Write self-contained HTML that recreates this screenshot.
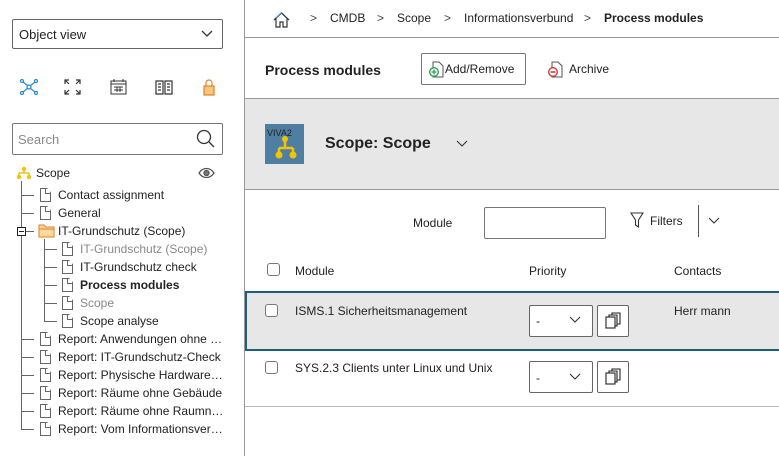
<!DOCTYPE html>
<html><head><meta charset="utf-8"><style>
*{box-sizing:border-box;margin:0;padding:0}
body{width:779px;height:456px;overflow:hidden;background:#fff;font-family:"Liberation Sans",sans-serif;color:#222;position:relative;font-size:12px}
.a{position:absolute}
.t{position:absolute;font-size:12px;white-space:nowrap;line-height:14px}
.f{position:absolute;width:11px;height:14px;border:1px solid #666;background:#fff;clip-path:polygon(0 0,65% 0,100% 30%,100% 100%,0 100%)}
.f:after{content:"";position:absolute;right:-1px;top:-1px;width:5px;height:5px;border-left:1px solid #666;border-bottom:1px solid #666}
.hl{position:absolute;height:1px;background:#666}
.vl{position:absolute;width:1px;background:#666}
.cb{position:absolute;width:13px;height:13px;border:1px solid #777;border-radius:3px;background:#fff}
.sel{position:absolute;width:64px;height:32px;border:1px solid #666;border-radius:2px;background:#fff}
.cp{position:absolute;width:32px;height:32px;border:1px solid #666;border-radius:2px;background:#fff}
</style></head><body>
<div class="a" style="left:244px;top:0;width:1px;height:456px;background:#999"></div>
<div class="a" style="left:12px;top:19px;width:211px;height:30px;border:1px solid #666;border-radius:2px"></div>
<div class="t" style="left:19px;top:28px;font-size:13px">Object view</div>
<svg class="a" style="left:200px;top:28px" width="14" height="12"><path d="M2 3l5 5 5-5" stroke="#333" fill="none" stroke-width="1.3"/></svg>
<svg class="a" style="left:19px;top:78px" width="20" height="18" stroke="#2a8ad0" fill="none" stroke-width="1.2"><circle cx="10" cy="9" r="2"/><circle cx="3" cy="3" r="1.5"/><circle cx="17" cy="3" r="1.5"/><circle cx="3" cy="15" r="1.5"/><circle cx="17" cy="15" r="1.5"/><path d="M4 4l5 4M16 4l-5 4M4 14l5-4M16 14l-5-4"/></svg>
<svg class="a" style="left:64px;top:79px" width="17" height="16" stroke="#333" fill="none" stroke-width="1.2"><path d="M1 5V1h4M1 1l4 4M16 5V1h-4M16 1l-4 4M1 11v4h4M1 15l4-4M16 11v4h-4M16 15l-4-4"/></svg>
<svg class="a" style="left:110px;top:79px" width="17" height="16" stroke="#333" fill="none" stroke-width="1"><rect x="1" y="2" width="15" height="13"/><path d="M1 5h15M4 0v3M13 0v3M4 8h9M4 11h9M7 8v5M10 8v5"/></svg>
<svg class="a" style="left:155px;top:79px" width="18" height="16" stroke="#333" fill="none" stroke-width="1.2"><path d="M1 2h7v13H1zM10 2h7v13h-7zM3 5h3M3 8h3M3 11h3M12 5h3M12 8h3M12 11h3"/></svg>
<svg class="a" style="left:203px;top:78px" width="12" height="18" stroke="#e67e22" fill="none" stroke-width="1.2"><path d="M3 8V5a3 3 0 0 1 6 0v3"/><rect x="1" y="8" width="10" height="9" fill="#f7c77e"/></svg>
<div class="a" style="left:12px;top:123px;width:211px;height:32px;border:1px solid #777;border-radius:2px"></div>
<div class="t" style="left:18px;top:133px;font-size:13px;color:#888">Search</div>
<svg class="a" style="left:196px;top:129px" width="20" height="20" stroke="#333" fill="none" stroke-width="1.3"><circle cx="8" cy="8" r="6.5"/><path d="M13 13l5 5"/></svg>
<svg class="a" style="left:16px;top:166px" width="16" height="14"><path d="M8 3v4M3 7h10M3 7v4M13 7v4" stroke="#e7b400" stroke-width="1.3" fill="none"/><circle cx="8" cy="3" r="2.2" fill="#f5c400"/><circle cx="3" cy="11" r="2.2" fill="#f5c400"/><circle cx="13" cy="11" r="2.2" fill="#f5c400"/></svg>
<div class="t" style="left:36px;top:166px">Scope</div>
<svg class="a" style="left:198px;top:167px" width="17" height="12" stroke="#555" fill="none" stroke-width="1.3"><path d="M1 6c4-6 11-6 15 0c-4 6-11 6-15 0z"/><circle cx="8.5" cy="6" r="2.5" fill="#777"/></svg>
<div class="vl" style="left:21px;top:181px;height:248px"></div>
<div class="hl" style="left:21px;top:195px;width:13px"></div>
<div class="hl" style="left:21px;top:213px;width:13px"></div>
<div class="hl" style="left:21px;top:231px;width:13px"></div>
<div class="hl" style="left:21px;top:339px;width:13px"></div>
<div class="hl" style="left:21px;top:357px;width:13px"></div>
<div class="hl" style="left:21px;top:375px;width:13px"></div>
<div class="hl" style="left:21px;top:393px;width:13px"></div>
<div class="hl" style="left:21px;top:411px;width:13px"></div>
<div class="hl" style="left:21px;top:429px;width:13px"></div>
<div class="a" style="left:17px;top:227px;width:9px;height:9px;border:1px solid #222;background:#fff"></div>
<div class="a" style="left:19px;top:231px;width:5px;height:1px;background:#222"></div>
<div class="f" style="left:40px;top:188px"></div><div class="t" style="left:58px;top:188px">Contact assignment</div>
<div class="f" style="left:40px;top:206px"></div><div class="t" style="left:58px;top:206px">General</div>
<svg class="a" style="left:38px;top:224px" width="17" height="14"><path d="M1 1h5l2 2h8v10H1z" fill="#fbd9a0" stroke="#e67e22"/><path d="M1 5h15" stroke="#e67e22"/></svg>
<div class="t" style="left:58px;top:224px">IT-Grundschutz (Scope)</div>
<div class="vl" style="left:44px;top:239px;height:82px"></div>
<div class="hl" style="left:44px;top:249px;width:13px"></div>
<div class="hl" style="left:44px;top:267px;width:13px"></div>
<div class="hl" style="left:44px;top:285px;width:13px"></div>
<div class="hl" style="left:44px;top:303px;width:13px"></div>
<div class="hl" style="left:44px;top:321px;width:13px"></div>
<div class="f" style="left:62px;top:242px"></div><div class="t" style="left:80px;top:242px;color:#888">IT-Grundschutz (Scope)</div>
<div class="f" style="left:62px;top:260px"></div><div class="t" style="left:80px;top:260px">IT-Grundschutz check</div>
<div class="f" style="left:62px;top:278px"></div><div class="t" style="left:80px;top:278px;font-weight:bold">Process modules</div>
<div class="f" style="left:62px;top:296px"></div><div class="t" style="left:80px;top:296px;color:#888">Scope</div>
<div class="f" style="left:62px;top:314px"></div><div class="t" style="left:80px;top:314px">Scope analyse</div>
<div class="f" style="left:40px;top:332px"></div><div class="t" style="left:58px;top:332px">Report: Anwendungen ohne …</div>
<div class="f" style="left:40px;top:350px"></div><div class="t" style="left:58px;top:350px">Report: IT-Grundschutz-Check</div>
<div class="f" style="left:40px;top:368px"></div><div class="t" style="left:58px;top:368px">Report: Physische Hardware…</div>
<div class="f" style="left:40px;top:386px"></div><div class="t" style="left:58px;top:386px">Report: Räume ohne Gebäude</div>
<div class="f" style="left:40px;top:404px"></div><div class="t" style="left:58px;top:404px">Report: Räume ohne Raumn…</div>
<div class="f" style="left:40px;top:422px"></div><div class="t" style="left:58px;top:422px">Report: Vom Informationsver…</div>
<svg class="a" style="left:273px;top:11px" width="17" height="17" stroke="#333" fill="none" stroke-width="1.2"><path d="M1 9L8.5 2 16 9M3 7v9h4v-5h3v5h4V7"/><path d="M3 7l5.5-5" stroke="#2a8ad0"/></svg>
<div class="t" style="left:310px;top:11px;color:#444">&gt;</div>
<div class="t" style="left:330px;top:11px">CMDB</div>
<div class="t" style="left:377px;top:11px;color:#444">&gt;</div>
<div class="t" style="left:397px;top:11px">Scope</div>
<div class="t" style="left:444px;top:11px;color:#444">&gt;</div>
<div class="t" style="left:464px;top:11px">Informationsverbund</div>
<div class="t" style="left:584px;top:11px;color:#444">&gt;</div>
<div class="t" style="left:604px;top:11px;font-weight:bold">Process modules</div>
<div class="a" style="left:245px;top:37px;width:534px;height:1px;background:#999"></div>
<div class="t" style="left:265px;top:62px;font-size:14px;font-weight:bold;line-height:16px">Process modules</div>
<div class="a" style="left:421px;top:53px;width:105px;height:32px;border:1px solid #777;border-radius:2px"></div>
<svg class="a" style="left:429px;top:61px" width="15" height="17"><path d="M4 1h6l4 4v11H4z" fill="#fff" stroke="#555"/><circle cx="5" cy="11" r="4.3" fill="#fff" stroke="#2a9d4a" stroke-width="1.3"/><path d="M5 8.5v5M2.5 11h5" stroke="#2a9d4a" stroke-width="1.3"/></svg>
<div class="t" style="left:445px;top:62px">Add/Remove</div>
<svg class="a" style="left:548px;top:61px" width="15" height="17"><path d="M4 1h6l4 4v11H4z" fill="#fff" stroke="#555"/><circle cx="5" cy="11" r="4.3" fill="#fff" stroke="#d03030" stroke-width="1.3"/><path d="M2.5 11h5" stroke="#d03030" stroke-width="1.5"/></svg>
<div class="t" style="left:569px;top:62px">Archive</div>
<div class="a" style="left:245px;top:98px;width:534px;height:92px;background:#e6e7e6;border-top:1px solid #999;border-bottom:1px solid #999"></div>
<div class="a" style="left:265px;top:124px;width:39px;height:40px;background:#4f7ea3"></div>
<div class="t" style="left:267px;top:126px;font-size:9px;color:#222">VIVA2</div>
<svg class="a" style="left:275px;top:136px" width="24" height="26"><path d="M10 3v8M4 12h14M4 12v6M18 12v6" stroke="#f5c400" stroke-width="2.5" fill="none"/><circle cx="10" cy="3" r="3" fill="#f5c400"/><circle cx="4" cy="19" r="3.5" fill="#f5c400"/><circle cx="18" cy="19" r="3.5" fill="#f5c400"/></svg>
<div class="t" style="left:325px;top:135px;font-size:16px;font-weight:bold;line-height:18px">Scope: Scope</div>
<svg class="a" style="left:456px;top:140px" width="12" height="8"><path d="M1 1l5 5 5-5" stroke="#333" fill="none" stroke-width="1.1"/></svg>
<div class="t" style="left:413px;top:216px">Module</div>
<div class="a" style="left:484px;top:207px;width:122px;height:32px;border:1px solid #777;border-radius:2px"></div>
<svg class="a" style="left:630px;top:212px" width="14" height="17"><path d="M1 1h12L8.5 8v7l-3-2V8z" fill="none" stroke="#333" stroke-width="1.1"/></svg>
<div class="t" style="left:650px;top:214px">Filters</div>
<div class="a" style="left:698px;top:205px;width:1px;height:32px;background:#555"></div>
<svg class="a" style="left:708px;top:217px" width="12" height="8"><path d="M1 1l5 5 5-5" stroke="#333" fill="none" stroke-width="1.1"/></svg>
<div class="cb" style="left:267px;top:263px"></div>
<div class="t" style="left:295px;top:264px">Module</div>
<div class="t" style="left:529px;top:264px">Priority</div>
<div class="t" style="left:674px;top:264px">Contacts</div>
<div class="a" style="left:245px;top:291px;width:540px;height:60px;background:#e6e7e6;border:2px solid #1d5f7a"></div>
<div class="cb" style="left:265px;top:304px"></div>
<div class="t" style="left:295px;top:304px">ISMS.1 Sicherheitsmanagement</div>
<div class="sel" style="left:529px;top:305px"></div>
<div class="t" style="left:536px;top:314px">-</div>
<svg class="a" style="left:569px;top:316px" width="12" height="8"><path d="M1 1l5 5 5-5" stroke="#333" fill="none" stroke-width="1.1"/></svg>
<div class="cp" style="left:597px;top:305px"></div>
<svg class="a" style="left:605px;top:312px" width="16" height="18" stroke="#222" fill="none" stroke-width="1.1"><rect x="1" y="5" width="9" height="11"/><path d="M4 5V3h8v11h-2M7 3V1h8v11h-3"/></svg>
<div class="t" style="left:674px;top:304px">Herr mann</div>
<div class="cb" style="left:265px;top:361px"></div>
<div class="t" style="left:295px;top:361px">SYS.2.3 Clients unter Linux und Unix</div>
<div class="sel" style="left:529px;top:361px"></div>
<div class="t" style="left:536px;top:371px">-</div>
<svg class="a" style="left:569px;top:373px" width="12" height="8"><path d="M1 1l5 5 5-5" stroke="#333" fill="none" stroke-width="1.1"/></svg>
<div class="cp" style="left:597px;top:361px"></div>
<svg class="a" style="left:605px;top:368px" width="16" height="18" stroke="#222" fill="none" stroke-width="1.1"><rect x="1" y="5" width="9" height="11"/><path d="M4 5V3h8v11h-2M7 3V1h8v11h-3"/></svg>
<div class="a" style="left:245px;top:406px;width:534px;height:1px;background:#bbb"></div>
</body></html>
